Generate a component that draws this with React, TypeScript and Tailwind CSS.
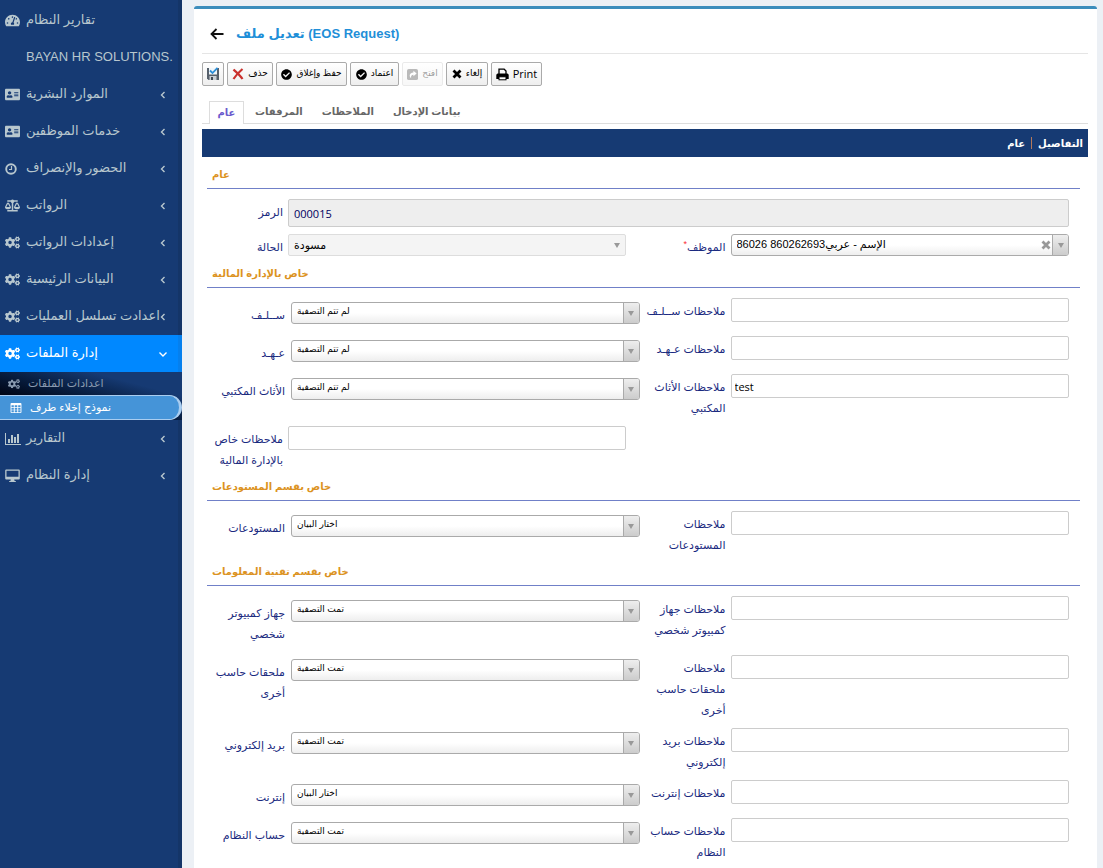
import React from "react";
import {
  FaAddressCard,
  FaBalanceScale,
  FaCheckCircle,
  FaCogs,
  FaTachometerAlt
} from "react-icons/fa";

interface MenuItem {
  label: string;
  icon?: React.ReactNode;
  arrow?: boolean;
  active?: boolean;
  children?: MenuItem[];
}

const ClockIcon = () => (
  <svg viewBox="0 0 12 12" className="h-3 w-3" fill="none" stroke="currentColor">
    <circle cx="6" cy="6" r="4.800" strokeWidth="1.900" />
    <path d="M6.500 3v3.500H4" strokeWidth="1.200" />
  </svg>
);

const ChartIcon = () => (
  <svg viewBox="0 0 16 14" className="h-3.5 w-4" fill="currentColor">
    <path d="M0 1h1v11h15v1H0z" />
    <path d="M3 7h2v4H3zM6 3h2v8H6zM9 5h2v6H9zM12 2h2v9h-2z" />
  </svg>
);

const MonitorIcon = () => (
  <svg viewBox="0 0 15 14" className="h-3.5 w-[15px]" fill="currentColor">
    <path
      fillRule="evenodd"
      d="M1.200 0.500h12.600q1 0 1 1v8q0 1-1 1H9.200l0.400 1.500h1.200v1H4.200v-1h1.200l0.400-1.500H1.200q-1 0-1-1v-8q0-1 1-1zM1.500 1.800v6h12v-6z"
    />
  </svg>
);

const GridIcon = () => (
  <svg viewBox="0 0 12 11" className="h-2.5 w-3" fill="currentColor">
    <path
      fillRule="evenodd"
      d="M1 0h10q1 0 1 1v9q0 1-1 1H1q-1 0-1-1V1q0-1 1-1zM1 2.500v2h2.600v-2zM4.600 2.500v2h2.800v-2zM8.400 2.500v2H11v-2zM1 5.300v2h2.600v-2zM4.600 5.300v2h2.800v-2zM8.400 5.300v2H11v-2zM1 8.100v2h2.600v-2zM4.600 8.100v2h2.800v-2zM8.400 8.100v2H11v-2z"
    />
  </svg>
);

const Chevron: React.FC<{ down?: boolean }> = ({ down }) => (
  <svg
    viewBox="0 0 10 10"
    className="h-2.5 w-2.5"
    fill="none"
    stroke="currentColor"
    strokeWidth="1.400"
  >
    <path d={down ? "M1.500 3.500L5 7l3.500-3.500" : "M6.500 2L3.500 5l3 3"} />
  </svg>
);

const menu: MenuItem[] = [
  { label: "تقارير النظام", icon: <FaTachometerAlt /> },
  { label: "BAYAN HR SOLUTIONS." },
  { label: "الموارد البشرية", icon: <FaAddressCard />, arrow: true },
  { label: "خدمات الموظفين", icon: <FaAddressCard />, arrow: true },
  { label: "الحضور والإنصراف", icon: <ClockIcon />, arrow: true },
  { label: "الرواتب", icon: <FaBalanceScale />, arrow: true },
  { label: "إعدادات الرواتب", icon: <FaCogs />, arrow: true },
  { label: "البيانات الرئيسية", icon: <FaCogs />, arrow: true },
  { label: "اعدادت تسلسل العمليات", icon: <FaCogs />, arrow: true },
  {
    label: "إدارة الملفات",
    icon: <FaCogs />,
    arrow: true,
    active: true,
    children: [
      { label: "اعدادات الملفات", icon: <FaCogs /> },
      { label: "نموذج إخلاء طرف", icon: <GridIcon />, active: true }
    ]
  },
  { label: "التقارير", icon: <ChartIcon />, arrow: true },
  { label: "إدارة النظام", icon: <MonitorIcon />, arrow: true }
];

const Sidebar: React.FC = () => {
  return (
    <nav className="w-[182px] shrink-0 border-r-4 border-[#143568] bg-[#163a73] pt-0.5 text-[#b8c7ce]">
      {menu.map((item) => (
        <div key={item.label}>
          <a
            href="#"
            className={
              item.active
                ? "-mr-1 flex h-[37px] items-center border-r-4 border-[#0580ee] bg-[#0088ff] pr-2.5 pl-[5px] text-white"
                : "flex h-[37px] items-center pr-2.5 pl-[5px]"
            }
          >
            <span className="w-[21px] shrink-0 text-[15px]">{item.icon}</span>
            <span className="min-w-0 flex-1 pb-px text-[13px] whitespace-nowrap">
              {item.label}
            </span>
            {item.arrow && <Chevron down={item.active} />}
          </a>
          {item.children && (
            <div className="-mr-1 bg-linear-to-tr from-black to-[#163a73] to-75%">
              {item.children.map((child) => (
                <a
                  key={child.label}
                  href="#"
                  className={
                    child.active
                      ? "flex h-[25px] items-center rounded-l-lg rounded-r-full border-y border-r-3 border-[#a9cdf0] bg-[#4594d8] pl-2.5 text-white"
                      : "flex h-[23px] items-center pl-2 text-[#8a9bb0]"
                  }
                >
                  <span className="w-5 shrink-0 text-xs">{child.icon}</span>
                  <span className="text-[11px]">{child.label}</span>
                </a>
              ))}
            </div>
          )}
        </div>
      ))}
    </nav>
  );
};

const SaveIcon = () => (
  <svg viewBox="0 0 14 14" className="h-3.5 w-3.5">
    <path d="M1 1h12v12H2.500L1 11.500z" fill="#56606b" />
    <rect x="3" y="1" width="8" height="6.500" fill="#f1f6fa" />
    <rect x="3.500" y="9" width="7" height="4" fill="#c9ced4" />
    <rect x="5" y="10" width="2" height="3" fill="#3f4954" />
    <path d="M4 3.500l2.500 2.500L11.500 0.800" fill="none" stroke="#2d8fd8" strokeWidth="1.800" />
  </svg>
);

const DeleteIcon = () => (
  <svg viewBox="0 0 12 12" className="h-3 w-3 shrink-0">
    <path
      d="M1.500 1.500C4 4 8 7 10.500 11M10.500 1C7 4 4 7 1.500 11"
      fill="none"
      stroke="#c9302c"
      strokeWidth="2.200"
    />
  </svg>
);

const ShareIcon = () => (
  <svg viewBox="0 0 12 12" className="h-[11px] w-[11px] shrink-0">
    <rect x="0" y="0" width="12" height="12" rx="2" fill="#555" />
    <path
      d="M7 2l3.500 3L7 8V6.200C5 6.200 4 7.500 4.500 10 2 8 2.500 4 7 3.800z"
      fill="#fff"
    />
  </svg>
);

const CrossIcon = () => (
  <svg viewBox="0 0 10 10" className="h-2.5 w-2.5 shrink-0">
    <path
      d="M1.500 1.500l7 7M8.500 1.500l-7 7"
      fill="none"
      stroke="currentColor"
      strokeWidth="2.800"
    />
  </svg>
);

const PrintIcon = () => (
  <svg viewBox="0 0 13 13" className="h-[13px] w-[13px] shrink-0">
    <path
      d="M3 6V1.200h5.200l1.800 1.800V6"
      fill="none"
      stroke="#000"
      strokeWidth="1.300"
    />
    <path d="M1.500 5.500h10l1.200 1.200V11H0.300V6.700z" fill="#000" />
    <rect x="3" y="8.800" width="7" height="3" fill="#fff" stroke="#000" />
  </svg>
);

const BackIcon = () => (
  <svg viewBox="0 0 14 12" className="h-3 w-3.5">
    <path
      d="M13.500 6H1.500M6.500 1L1.500 6l5 5"
      fill="none"
      stroke="#111"
      strokeWidth="1.800"
    />
  </svg>
);

const actions = [
  { label: "حذف", icon: <DeleteIcon />, width: "w-[46px]" },
  { label: "حفظ وإغلاق", icon: <FaCheckCircle />, width: "w-[71px]" },
  { label: "اعتماد", icon: <FaCheckCircle />, width: "w-[49px]" },
  { label: "افتح", icon: <ShareIcon />, width: "w-[41px]", disabled: true },
  { label: "إلغاء", icon: <CrossIcon />, width: "w-[42px]" }
];

const buttonStyle =
  "flex h-6 items-center justify-center gap-1 rounded-xs border border-[#aaa] bg-linear-to-b from-white to-[#eee] text-black";

const Toolbar: React.FC = () => {
  return (
    <div className="flex flex-wrap gap-[3px] pt-2">
      <button type="button" aria-label="حفظ" className={buttonStyle + " w-[22px]"}>
        <SaveIcon />
      </button>
      {actions.map((a) => (
        <button
          key={a.label}
          type="button"
          disabled={a.disabled}
          className={`${buttonStyle} ${a.width} disabled:border-[#ccc] disabled:opacity-40`}
        >
          <span className="text-[11px]">{a.icon}</span>
          <span className="text-[9px] whitespace-nowrap">{a.label}</span>
        </button>
      ))}
      <button type="button" className={buttonStyle + " w-[51px]"}>
        <PrintIcon />
        <span className="font-['Open_Sans',sans-serif] text-[11px]">Print</span>
      </button>
    </div>
  );
};

const tabs = ["عام", "المرفقات", "الملاحظات", "بيانات الإدخال"];

const Tabs: React.FC = () => {
  return (
    <div role="tablist" className="mt-[15px] flex border-b border-[#ddd] pl-[7px]">
      {tabs.map((tab, i) => (
        <button
          key={tab}
          type="button"
          role="tab"
          aria-selected={i === 0}
          className={
            i === 0
              ? "-mb-px h-[23px] w-[35px] border border-b-0 border-[#ddd] bg-white pb-0.5 text-[10px] font-bold text-[#6a5acd]"
              : "mr-2 ml-[11px] h-[22px] pb-0.5 text-[10px] font-bold text-[#666]"
          }
        >
          {tab}
        </button>
      ))}
    </div>
  );
};

interface FieldProps {
  id: string;
  label: string;
  value?: string;
}

const SectionTitle: React.FC<{ children: React.ReactNode }> = ({ children }) => (
  <h2 className="mb-2.5 h-[23px] border-b border-[#7080c8] pl-[5px] text-[10px] leading-[18px] font-bold text-[#dc931f]">
    {children}
  </h2>
);

const Arrow = () => (
  <span className="h-0 w-0 border-x-3 border-t-5 border-x-transparent border-t-[#999]" />
);

// Left column drop-down
const SelectField: React.FC<FieldProps> = ({ id, label, value }) => (
  <div className="flex items-start pr-1">
    <label
      htmlFor={id}
      className="w-[78px] shrink-0 pt-[7px] pb-2.5 text-right text-[11px] leading-[21px] whitespace-pre text-[#1a2a80]"
    >
      {label}
    </label>
    <div className="relative mt-1 ml-1.5 flex-1">
      <select
        id={id}
        defaultValue={value}
        className="block h-[22px] w-full appearance-none rounded-[3px] border border-[#aaa] bg-linear-to-b from-white from-50% to-[#eee] pr-5 pb-0.5 pl-[5px] text-[9px] text-black"
      >
        <option>{value}</option>
      </select>
      <span className="pointer-events-none absolute inset-y-px right-px flex w-4 items-center justify-center rounded-r-xs border-l border-[#aaa] bg-linear-to-b from-[#eee] to-[#ccc]">
        <Arrow />
      </span>
    </div>
  </div>
);

// Text box, used in both columns
const TextField: React.FC<FieldProps & { left?: boolean }> = ({
  id,
  label,
  value,
  left
}) => (
  <div className={left ? "flex items-start pr-[18px]" : "flex items-start pr-[11px]"}>
    <label
      htmlFor={id}
      className={`${left ? "w-[76px]" : "w-[82px]"} shrink-0 pt-[3px] pb-[7px] text-right text-[11px] leading-[21px] whitespace-pre text-[#1a2a80]`}
    >
      {label}
    </label>
    <input
      id={id}
      type="text"
      defaultValue={value}
      className="ml-[5px] h-6 min-w-0 flex-1 rounded-xs border border-[#ccc] bg-white px-[3px] font-['Open_Sans',sans-serif] text-[11px] text-black"
    />
  </div>
);

const Row: React.FC<{ children: React.ReactNode }> = ({ children }) => (
  <div className="grid min-h-[38px] grid-cols-2">{children}</div>
);

const NOT_CLEARED = "لم تتم التصفية";
const CLEARED = "تمت التصفية";
const CHOOSE = "اختار البيان";

interface Clearance {
  id: string;
  label: string;
  value: string;
  note: string;
  text?: string;
}

const finance: Clearance[] = [
  { id: "advance", label: "ســلـف", value: NOT_CLEARED, note: "ملاحظات ســلـف" },
  { id: "custody", label: "عـهـد", value: NOT_CLEARED, note: "ملاحظات عـهـد" },
  {
    id: "furniture",
    label: "الأثاث المكتبي",
    value: NOT_CLEARED,
    note: "ملاحظات الأثاث\nالمكتبي",
    text: "test"
  }
];

const warehouse: Clearance[] = [
  { id: "warehouse", label: "المستودعات", value: CHOOSE, note: "ملاحظات\nالمستودعات" }
];

const technology: Clearance[] = [
  {
    id: "pc",
    label: "جهاز كمبيوتر\nشخصي",
    value: CLEARED,
    note: "ملاحظات جهاز\nكمبيوتر شخصي"
  },
  {
    id: "accessories",
    label: "ملحقات حاسب\nأخرى",
    value: CLEARED,
    note: "ملاحظات\nملحقات حاسب\nأخرى"
  },
  {
    id: "email",
    label: "بريد إلكتروني",
    value: CLEARED,
    note: "ملاحظات بريد\nإلكتروني"
  },
  { id: "internet", label: "إنترنت", value: CHOOSE, note: "ملاحظات إنترنت" },
  {
    id: "account",
    label: "حساب النظام",
    value: CLEARED,
    note: "ملاحظات حساب\nالنظام"
  }
];

const ClearanceRows: React.FC<{ rows: Clearance[] }> = ({ rows }) => (
  <>
    {rows.map((row) => (
      <Row key={row.id}>
        <SelectField id={row.id} label={row.label} value={row.value} />
        <TextField id={row.id + "-note"} label={row.note} value={row.text} />
      </Row>
    ))}
  </>
);

const General: React.FC = () => {
  return (
    <>
      <div className="flex h-9 items-start pr-[11px]">
        <label
          htmlFor="code"
          className="w-[76px] shrink-0 pt-[3px] text-right text-[11px] leading-[21px] text-[#1a2a80]"
        >
          الرمز
        </label>
        <input
          id="code"
          readOnly
          defaultValue="000015"
          className="ml-[5px] h-7 min-w-0 flex-1 rounded-xs border border-[#ccc] bg-[#eee] px-[5px] font-['Open_Sans',sans-serif] text-[11px] font-medium text-[#000060]"
        />
      </div>
      <div className="grid h-[30px] grid-cols-2">
        <div className="flex items-start pr-[18px]">
          <label
            htmlFor="status"
            className="w-[76px] shrink-0 pt-0.5 text-right text-[11px] leading-[21px] text-[#1a2a80]"
          >
            الحالة
          </label>
          <div className="relative -mt-px ml-[5px] flex-1">
            <select
              id="status"
              disabled
              className="block h-[22px] w-full appearance-none rounded-xs border border-[#ddd] bg-[#f4f4f4] pl-[5px] text-[11px] text-black opacity-100"
            >
              <option>مسودة</option>
            </select>
            <span className="pointer-events-none absolute inset-y-px right-px flex w-4 items-center justify-center">
              <Arrow />
            </span>
          </div>
        </div>
        <div className="flex items-start pr-[11px]">
          <label
            htmlFor="employee"
            className="w-[82px] shrink-0 pt-0.5 text-right text-[11px] leading-[21px] text-[#1a2a80]"
          >
            <sup className="text-[9px] text-red-500">*</sup>الموظف
          </label>
          <div className="relative -mt-px ml-[5px] flex-1">
            <select
              id="employee"
              className="block h-[22px] w-full appearance-none rounded-[3px] border border-[#aaa] bg-linear-to-b from-white from-50% to-[#eee] pr-9 pb-0.5 pl-[5px] text-[11px] text-black"
            >
              <option>الإسم - عربي860262693 86026</option>
            </select>
            <button
              type="button"
              aria-label="مسح"
              className="absolute inset-y-0 right-[18px] text-[#999]"
            >
              <CrossIcon />
            </button>
            <span className="pointer-events-none absolute inset-y-px right-px flex w-4 items-center justify-center rounded-r-xs border-l border-[#aaa] bg-linear-to-b from-[#eee] to-[#ccc]">
              <Arrow />
            </span>
          </div>
        </div>
      </div>
    </>
  );
};

const App: React.FC = () => {
  return (
    <div className="flex h-screen overflow-hidden bg-[#ecf0f5] font-['Liberation_Sans','DejaVu_Sans',sans-serif]">
      <Sidebar />
      <main className="min-w-0 flex-1 pt-1.5 pr-1.5 pl-3">
        <div className="min-h-screen rounded-[3px] border-t-3 border-[#3c8dbc] bg-white pr-[9px] pl-2">
          <header className="flex h-[45px] items-center gap-3 border-b border-[#e5e5e5] pt-1.5 pl-2">
            <button type="button" aria-label="رجوع">
              <BackIcon />
            </button>
            <h1 className="text-[13px] font-bold text-[#1f8fd8]">
              تعديل ملف (EOS Request)
            </h1>
          </header>
          <Toolbar />
          <Tabs />
          <div
            dir="rtl"
            className="mt-[5px] flex h-7 items-center gap-1.5 bg-[#163a73] px-[5px] text-[10px] font-bold text-white"
          >
            <span>التفاصيل</span>
            <span className="h-3 w-px bg-[#b5785a]" />
            <span>عام</span>
          </div>
          <form className="pt-[9px] pr-2 pl-[5px]">
            <SectionTitle>عام</SectionTitle>
            <General />
            <SectionTitle>خاص بالإدارة المالية</SectionTitle>
            <ClearanceRows rows={finance} />
            <Row>
              <TextField
                left
                id="finance-note"
                label={"ملاحظات خاص\nبالإدارة المالية"}
              />
            </Row>
            <SectionTitle>خاص بقسم المستودعات</SectionTitle>
            <ClearanceRows rows={warehouse} />
            <SectionTitle>خاص بقسم تقنية المعلومات</SectionTitle>
            <ClearanceRows rows={technology} />
          </form>
        </div>
      </main>
    </div>
  );
};

export default App;
